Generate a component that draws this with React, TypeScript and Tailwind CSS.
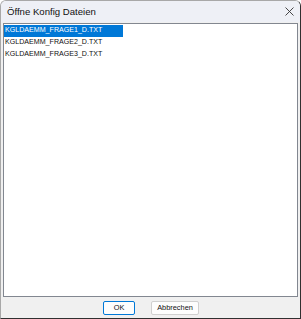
import React from "react";

const items = ["KGLDAEMM_FRAGE1_D.TXT", "KGLDAEMM_FRAGE2_D.TXT", "KGLDAEMM_FRAGE3_D.TXT"];

export default function App() {
  return (
    <div className="w-[301px] h-[319px] flex flex-col bg-[#f0f0f0] border border-[#a8a8a8] border-r-[#303030] border-b-[#303030] rounded-t-[6px] overflow-hidden font-['Liberation_Sans',Arial,sans-serif]">
      <div className="h-[21px] shrink-0 flex items-center justify-between bg-[#eef0f6] pl-[6px] pr-[5px]">
        <span className="text-[9.6px] text-[#111] leading-none pt-[1px]">Öffne Konfig Dateien</span>
        <svg width="9" height="9" viewBox="0 0 9 9" className="mr-[1px]">
          <path d="M0.5 0.5 L8.5 8.5 M8.5 0.5 L0.5 8.5" stroke="#333" strokeWidth="0.9" fill="none" />
        </svg>
      </div>
      <div className="px-[2px] pt-[1px]">
        <div className="h-[274px] border border-[#828790] bg-white pt-[1px]">
          {items.map((t, i) => (
            <div
              key={t}
              className={
                "h-[12px] w-[119px] flex items-center pl-[1px] text-[7.1px] leading-none " +
                (i === 0 ? "bg-[#0078d7] text-white" : "text-[#111]")
              }
            >
              {t}
            </div>
          ))}
        </div>
      </div>
      <div className="flex justify-center gap-[16px] pt-[4px] pl-[1px]">
        <button className="w-[32px] h-[14px] rounded-[2px] border border-[#0078d7] bg-[#fdfdfd] text-[7.4px] text-[#111] flex items-center justify-center leading-none">
          OK
        </button>
        <button className="w-[48px] h-[14px] rounded-[2px] border border-[#d0d0d0] bg-[#fdfdfd] text-[7.4px] text-[#111] flex items-center justify-center leading-none">
          Abbrechen
        </button>
      </div>
    </div>
  );
}
